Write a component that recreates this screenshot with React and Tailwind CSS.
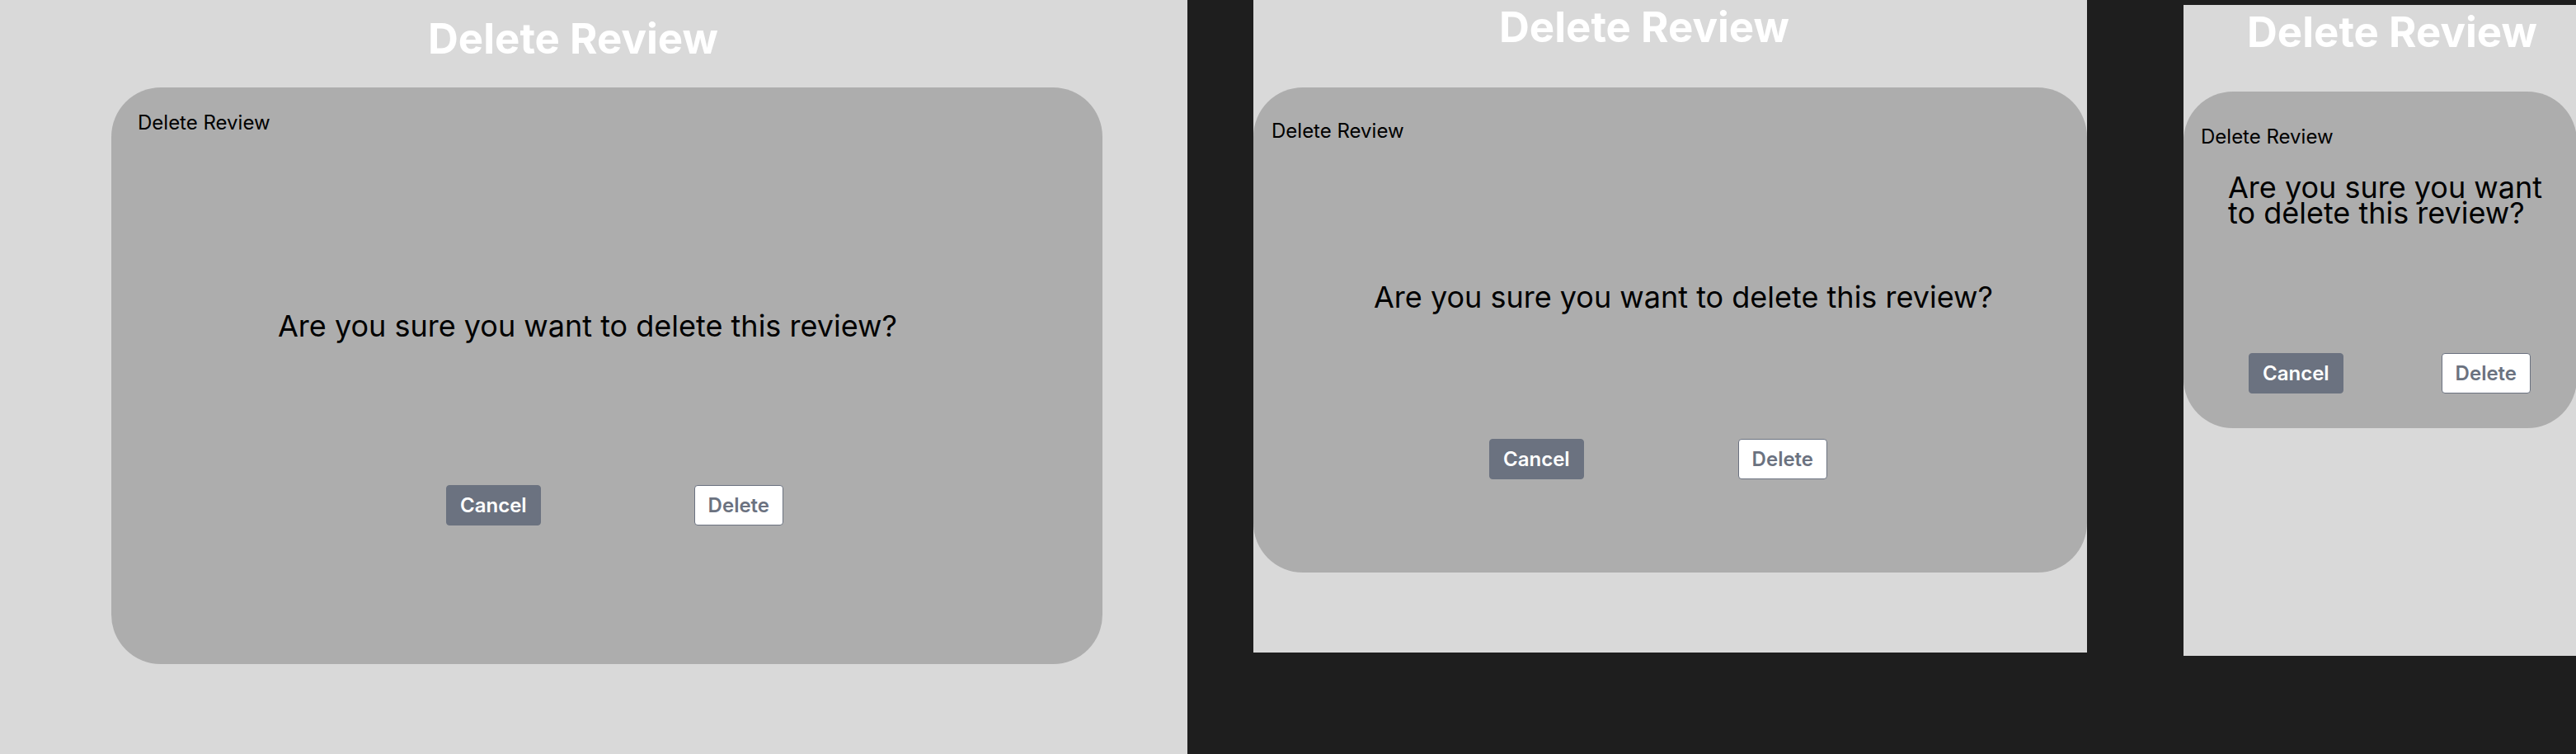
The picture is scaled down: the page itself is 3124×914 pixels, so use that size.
import React from "react";

// one frame per breakpoint, offsets read off the mockup
const frames = [
  {
    wrap: "w-[1440px] h-[914px]",
    title: "pt-[21px] pl-[519px]",
    card: "ml-[135px] mt-[34px] w-[1202px] h-[699px] pt-[27px] pl-[32px]",
    question: "mt-[215px] ml-[170px] whitespace-nowrap",
    actions: "mt-[177px] ml-[374px] gap-[186px]",
  },
  {
    wrap: "ml-[80px] w-[1011px] h-[791px]",
    title: "pt-[7px] pl-[298px]",
    card: "mt-[48px] w-[1011px] h-[588px] pt-[37px] pl-[22px]",
    question: "mt-[170px] ml-[124px] whitespace-nowrap",
    actions: "mt-[156px] ml-[264px] gap-[187px]",
  },
  {
    wrap: "ml-[117px] mt-[6px] w-[477px] h-[789px]",
    title: "pt-[7px] pl-[77px]",
    card: "mt-[47px] w-[477px] h-[408px] pt-[39px] pl-[21px]",
    question: "mt-[30px] ml-[33px] w-[400px]",
    actions: "mt-[154px] ml-[58px] gap-[119px]",
  },
];

const DeleteFrame = ({ f }) => {
  return (
    <div className={`${f.wrap} shrink-0 bg-[#d9d9d9]`}>
      <h1 className={`${f.title} text-[51px] leading-none font-bold text-white whitespace-nowrap`}>
        Delete Review
      </h1>
      <div className={`${f.card} rounded-[60px] bg-[#adadad] flex flex-col items-start`}>
        <p className="text-2xl text-black">Delete Review</p>
        <p className={`${f.question} text-4xl leading-[31px] text-black`}>
          Are you sure you want to delete this review?
        </p>
        <div className={`${f.actions} flex`}>
          <button className="h-[49px] px-4 rounded border border-[#6b7280] bg-[#6b7280] text-2xl font-semibold text-white">
            Cancel
          </button>
          <button className="h-[49px] px-4 rounded border border-[#6b7280] bg-white text-2xl font-semibold text-[#6b7280]">
            Delete
          </button>
        </div>
      </div>
    </div>
  );
};

export default function App() {
  return (
    <div className="w-[3124px] h-[914px] overflow-hidden flex items-start bg-[#1e1e1e] font-['Inter','Noto_Sans',sans-serif]">
      {frames.map((f, i) => (
        <DeleteFrame key={i} f={f} />
      ))}
    </div>
  );
}
